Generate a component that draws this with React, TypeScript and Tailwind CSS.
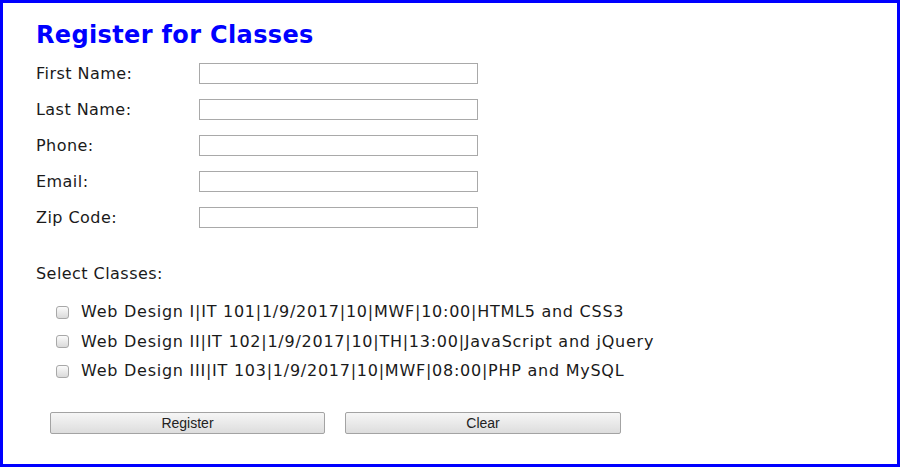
import { useState } from "react";

const fields = ["First Name:", "Last Name:", "Phone:", "Email:", "Zip Code:"];

const classes = [
  "Web Design I|IT 101|1/9/2017|10|MWF|10:00|HTML5 and CSS3",
  "Web Design II|IT 102|1/9/2017|10|TH|13:00|JavaScript and jQuery",
  "Web Design III|IT 103|1/9/2017|10|MWF|08:00|PHP and MySQL",
];

function Box({ checked, onClick }: { checked: boolean; onClick: () => void }) {
  return (
    <span
      onClick={onClick}
      className="w-[13px] h-[13px] shrink-0 rounded-[3px] border border-[#a8a8a8] bg-gradient-to-b from-[#fbfbfb] to-[#dadada] grid place-items-center text-[10px] leading-none text-[#222]"
    >
      {checked ? "✓" : ""}
    </span>
  );
}

export default function App() {
  const [values, setValues] = useState<string[]>(fields.map(() => ""));
  const [picked, setPicked] = useState<boolean[]>(classes.map(() => false));

  return (
    <div className="w-[900px] h-[467px] border-[3px] border-[#0000ff] bg-white text-[#1a1a1a] font-['DejaVu_Sans',Verdana,sans-serif] overflow-hidden">
      <div className="pl-[33px] pt-[18px]">
        <h1 className="text-[24px] leading-[28px] font-bold text-[#0000ff] tracking-[0.35px]">
          Register for Classes
        </h1>

        <div className="mt-[14px] flex flex-col gap-[15px]">
          {fields.map((f, i) => (
            <div key={f} className="flex items-center h-[21px]">
              <label className="w-[163px] text-[16px] leading-[19px] tracking-[0.45px]">
                {f}
              </label>
              <input
                value={values[i]}
                onChange={(e) => {
                  const next = [...values];
                  next[i] = e.target.value;
                  setValues(next);
                }}
                className="w-[279px] h-[21px] border border-[#a9a9a9] bg-white px-1 text-[13px] outline-none"
              />
            </div>
          ))}
        </div>

        <div className="mt-[36px] text-[16px] leading-[19px] tracking-[0.45px]">Select Classes:</div>

        <div className="mt-[14.5px] pl-[20px] flex flex-col">
          {classes.map((c, i) => (
            <div key={c} className="flex items-center gap-[12px] h-[29.5px] text-[16px]">
              <Box
                checked={picked[i]}
                onClick={() => {
                  const next = [...picked];
                  next[i] = !next[i];
                  setPicked(next);
                }}
              />
              <span className="tracking-[0.75px]">{c}</span>
            </div>
          ))}
        </div>

        <div className="mt-[25.5px] ml-[14px] flex gap-[20px] font-['Liberation_Sans',Arial,sans-serif] text-[14px]">
          <button className="w-[275px] h-[22px] rounded-[2px] border border-[#a3a3a3] bg-gradient-to-b from-[#f6f6f6] to-[#dddddd] text-[#222]">
            Register
          </button>
          <button
            onClick={() => {
              setValues(fields.map(() => ""));
              setPicked(classes.map(() => false));
            }}
            className="w-[276px] h-[22px] rounded-[2px] border border-[#a3a3a3] bg-gradient-to-b from-[#f6f6f6] to-[#dddddd] text-[#222]"
          >
            Clear
          </button>
        </div>
      </div>
    </div>
  );
}
